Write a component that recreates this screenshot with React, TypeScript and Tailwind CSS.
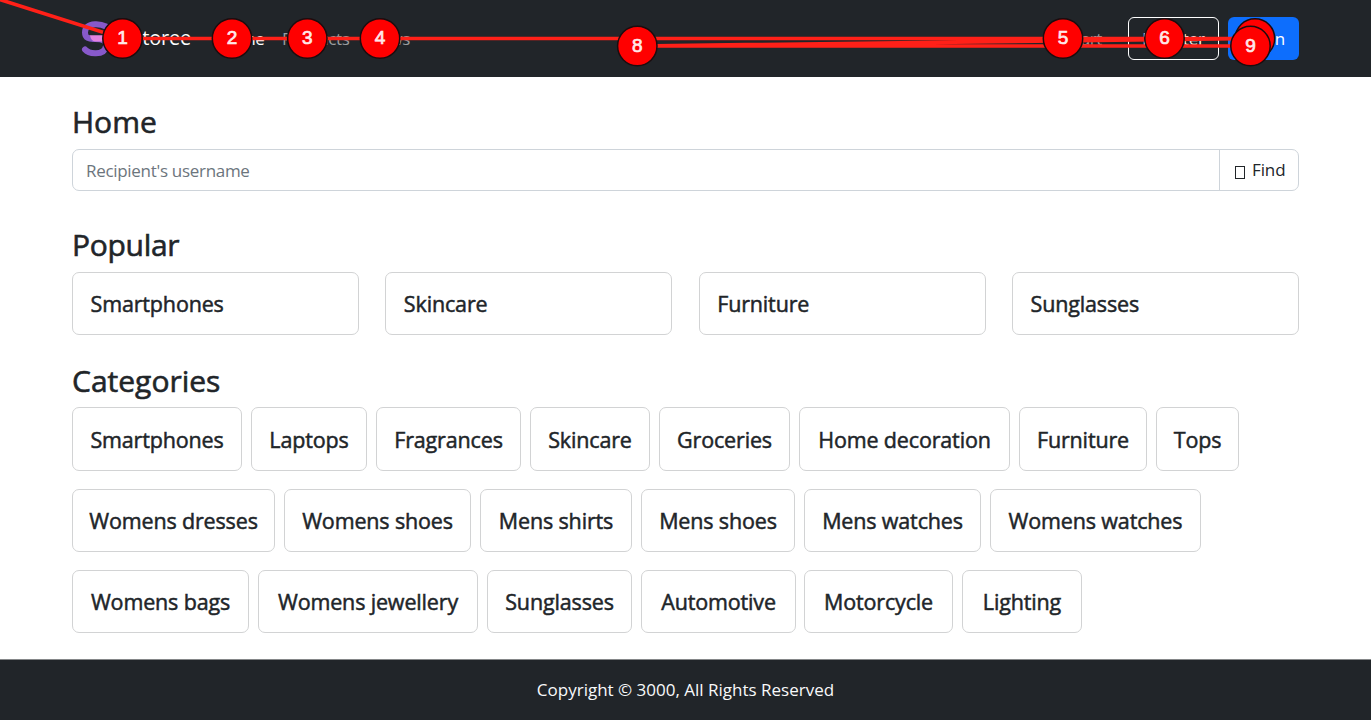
import React from "react";

const popular = ["Smartphones", "Skincare", "Furniture", "Sunglasses"];

const categoryRows = [
  {
    box: "h-16",
    items: [
      { label: "Smartphones", width: "w-[170px]" },
      { label: "Laptops", width: "w-[116px]" },
      { label: "Fragrances", width: "w-[145px]" },
      { label: "Skincare", width: "w-[120px]" },
      { label: "Groceries", width: "w-[131px]" },
      { label: "Home decoration", width: "w-[211px]" },
      { label: "Furniture", width: "w-[128px]" },
      { label: "Tops", width: "w-[83px]" },
    ],
  },
  {
    box: "h-[63px]",
    items: [
      { label: "Womens dresses", width: "w-[203px]" },
      { label: "Womens shoes", width: "w-[187px]" },
      { label: "Mens shirts", width: "w-[152px]" },
      { label: "Mens shoes", width: "w-[154px]" },
      { label: "Mens watches", width: "w-[177px]" },
      { label: "Womens watches", width: "w-[211px]" },
    ],
  },
  {
    box: "h-[63px]",
    items: [
      { label: "Womens bags", width: "w-[177px]" },
      { label: "Womens jewellery", width: "w-[220px]" },
      { label: "Sunglasses", width: "w-[145px]" },
      { label: "Automotive", width: "w-[155px] -mr-px" },
      { label: "Motorcycle", width: "w-[149px]" },
      { label: "Lighting", width: "w-[120px]" },
    ],
  },
];

const stops = [
  { n: 1, x: 122.5, y: 38.5 },
  { n: 2, x: 232, y: 38.5 },
  { n: 3, x: 307.3, y: 38.5 },
  { n: 4, x: 380, y: 38.5 },
  { n: 5, x: 1063, y: 38.5 },
  { n: 6, x: 1164.5, y: 38.5 },
  { n: 7, x: 1255, y: 38.5 },
  { n: 8, x: 637.3, y: 46 },
  { n: 9, x: 1250.5, y: 46 },
];

function Logo() {
  return (
    <svg width="32" height="36" viewBox="0 0 32 36" fill="none">
      <path d="M8 14.5H25V21H13Q9 20 8 14.5Z" fill="#e583e0" />
      <path
        d="M25 5.5Q20 3 14 3.3C7 3.5 4 7 4 11.500C4 18 9 17.700 14 18C22 18 26 20 25 25C24 31 19 32.500 14 32.300Q7 32 4 28.500"
        stroke="#8759ca"
        strokeWidth="6"
        strokeLinecap="round"
      />
      <path d="M9 14.5H25V20.500H14Q10 20 9 14.5Z" fill="#e583e0" />
    </svg>
  );
}

function Path() {
  return (
    <svg className="pointer-events-none absolute left-0 top-0" width="1371" height="80" viewBox="0 0 1371 80">
      <polyline
        points={"-2,-1 " + stops.map((s) => `${s.x},${s.y}`).join(" ")}
        fill="none"
        stroke="#ff2018"
        strokeWidth="3.7"
      />
      {stops.map((s) => (
        <g key={s.n}>
          <circle cx={s.x} cy={s.y} r="19.7" fill="#ff0000" stroke="#1c0c0e" strokeWidth="1.5" />
          <text
            x={s.x}
            y={s.y + 5.500}
            textAnchor="middle"
            fill="#ffe9e9"
            stroke="#ffe9e9"
            strokeWidth="0.7"
            className="font-['Liberation_Sans',sans-serif] text-[19px]"
          >
            {s.n}
          </text>
        </g>
      ))}
    </svg>
  );
}

export default function App() {
  return (
    <div className="relative flex h-[720px] w-[1371px] flex-col overflow-hidden bg-white font-['Open_Sans','Noto_Sans',sans-serif] text-[#212529]">
      <header className="flex h-[77px] shrink-0 items-center bg-[#212529] px-[72px] text-[17px]">
        <div className="flex items-center pl-[9px]">
          <Logo />
          <span className="w-[78px] -translate-y-px whitespace-nowrap text-right text-[20px] tracking-[-0.2px] text-white">Storee</span>
        </div>
        <nav className="flex pl-[27px] tracking-[-0.4px] text-[#9b9d9f]">
          <span className="w-[64px] text-white">Home</span>
          <span className="w-[86px]">Products</span>
          <span>News</span>
        </nav>
        <div className="ml-auto flex items-center tracking-[-0.4px]">
          <span className="mr-[26px] text-[#9b9d9f]">Cart</span>
          <button className="mr-[9px] h-[43px] w-[91px] rounded-md border border-white tracking-[-0.2px] text-[#f8f9fa]">Register</button>
          <button className="h-[43px] w-[71px] rounded-md bg-[#0d6efd] tracking-[0.1px] text-white">Login</button>
        </div>
      </header>

      <main className="flex h-[582px] shrink-0 flex-col px-[72px] pt-[27px]">
        <h1 className="h-[45px] text-[30px] leading-[36px] [-webkit-text-stroke:0.6px_#212529]">Home</h1>
        <div className="flex h-[42px] w-[1227px] rounded-[7px] border border-[#ced4da] text-[17px] leading-[42px]">
          <div className="w-[1147px] border-r border-[#ced4da] pl-[13px] tracking-[-0.3px] text-[#6c757d]">
            Recipient's username
          </div>
          <button className="flex flex-1 items-center pl-[15px]">
            <span className="mr-[7px] mt-[5px] h-[13px] w-[10px] border border-[#212529]" />
            <span className="tracking-[-0.1px]">Find</span>
          </button>
        </div>

        <h2 className="mt-9 h-[45px] text-[30px] leading-[36px] tracking-[-0.3px] [-webkit-text-stroke:0.6px_#212529]">Popular</h2>
        <div className="grid grid-cols-4 gap-x-[26.4px]">
          {popular.map((label) => (
            <div key={label} className="flex h-[63px] items-center rounded-[7px] border border-[#d2d3d4] pl-[17.500px] pt-0.5 text-[21.500px] tracking-[-0.15px] [-webkit-text-stroke:0.5px_#212529]">
              {label}
            </div>
          ))}
        </div>

        <h2 className="mt-7 h-[44px] text-[30px] leading-[36px] [-webkit-text-stroke:0.6px_#212529]">Categories</h2>
        <div className="flex flex-col gap-[18px]">
          {categoryRows.map((row, i) => (
            <div key={i} className="flex gap-[9px]">
              {row.items.map((item) => (
                <div
                  key={item.label}
                  className={`${item.width} ${row.box} flex shrink-0 items-center justify-center whitespace-nowrap rounded-[7px] border border-[#d2d3d4] pt-0.5 text-[21.500px] tracking-[-0.15px] [-webkit-text-stroke:0.5px_#212529]`}
                >
                  {item.label}
                </div>
              ))}
            </div>
          ))}
        </div>
      </main>

      <footer className="flex h-[61px] shrink-0 items-center justify-center border-t border-[#858789] bg-[#212529] text-[17px] text-[#f8f9fa]">
        Copyright © 3000, All Rights Reserved
      </footer>

      <Path />
    </div>
  );
}
